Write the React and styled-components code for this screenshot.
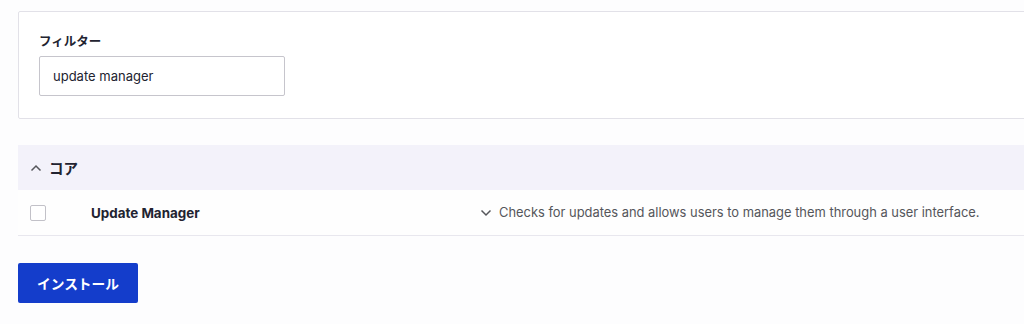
import React from "react";
import styled, { createGlobalStyle } from "styled-components";

const GlobalStyle = createGlobalStyle`
  * {
    box-sizing: border-box;
  }
  body {
    margin: 0;
    background: #fdfdfe;
    overflow: hidden;
    font-family: Inter, "Noto Sans CJK JP", sans-serif;
    color: #222330;
  }
`;

const Page = styled.div`
  width: 1060px;
  padding: 11px 0 0 18px;
`;

const FilterCard = styled.div`
  background: #fff;
  border: 1px solid #e2e1e8;
  border-radius: 2px;
  padding: 22px 20px 23px 20px;
  height: 108px;
`;

const Label = styled.label`
  display: block;
  font-size: 12.5px;
  font-weight: 700;
  line-height: 15px;
  margin-bottom: 7px;
`;

const Input = styled.input`
  width: 246px;
  height: 40px;
  border: 1px solid #c6c5cc;
  border-radius: 2px;
  padding: 0 13px;
  font-family: Inter, "Noto Sans CJK JP", sans-serif;
  font-size: 13px;
  color: #222330;
  background: #fff;
  outline: none;
`;

const Table = styled.div`
  margin-top: 26px;
`;

const GroupHeader = styled.div`
  display: flex;
  align-items: center;
  gap: 7px;
  height: 45px;
  padding-left: 12px;
  background: #f3f2fa;
  font-size: 14.5px;
  font-weight: 700;
`;

const Row = styled.div`
  display: flex;
  align-items: center;
  height: 46px;
  border-bottom: 1px solid #e8e7ee;
  background: #fefefe;
`;

const Check = styled.span`
  width: 16px;
  height: 16px;
  margin-left: 12px;
  border: 1px solid #c2c1c8;
  border-radius: 2px;
  background: #fff;
`;

const Name = styled.span`
  margin-left: 45px;
  width: 389px;
  font-size: 13.4px;
  font-weight: 700;
`;

const Desc = styled.span`
  display: flex;
  align-items: center;
  gap: 7px;
  font-size: 12.9px;
  color: #55565b;
`;

const Actions = styled.div`
  padding-top: 27px;
`;

const Button = styled.button`
  height: 40px;
  width: 120px;
  border: none;
  border-radius: 2px;
  background: #143dcb;
  color: #fff;
  font-family: Inter, "Noto Sans CJK JP", sans-serif;
  font-size: 13.7px;
  font-weight: 700;
`;

const Chevron = ({ up }) => (
  <svg width="12" height="8" viewBox="0 0 12 8" fill="none">
    <path
      d={up ? "M1.5 6.5 L6 2 L10.5 6.5" : "M1.5 1.5 L6 6 L10.5 1.5"}
      stroke="#55565b"
      strokeWidth="1.5"
    />
  </svg>
);

export default function App() {
  return (
    <>
      <GlobalStyle />
      <Page>
        <FilterCard>
          <Label>フィルター</Label>
          <Input defaultValue="update manager" />
        </FilterCard>
        <Table>
          <GroupHeader>
            <Chevron up />
            コア
          </GroupHeader>
          <Row>
            <Check />
            <Name>Update Manager</Name>
            <Desc>
              <Chevron />
              Checks for updates and allows users to manage them through a user interface.
            </Desc>
          </Row>
        </Table>
        <Actions>
          <Button>インストール</Button>
        </Actions>
      </Page>
    </>
  );
}
